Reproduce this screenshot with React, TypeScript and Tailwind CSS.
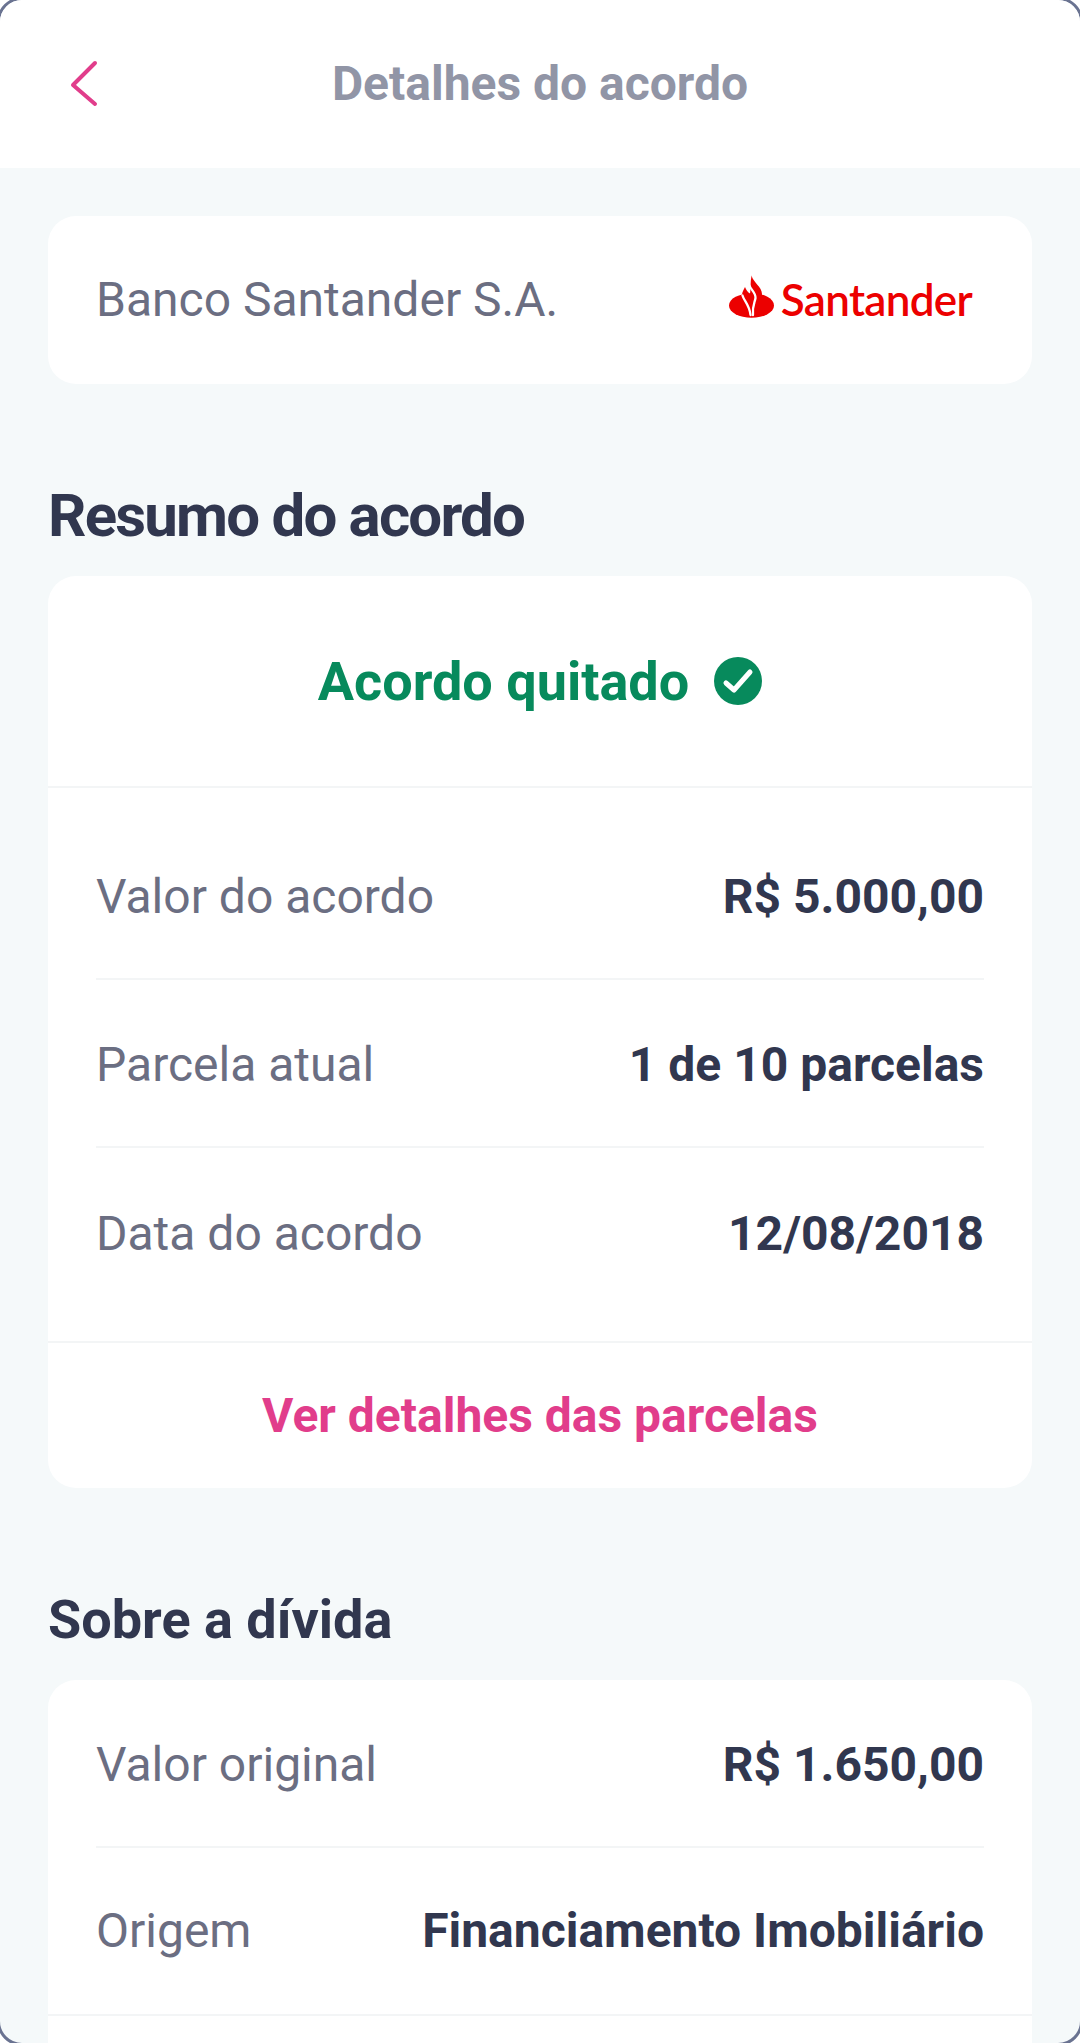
import React from "react";

function Row({ label, value, divider = true }: { label: string; value: string; divider?: boolean }) {
  return (
    <div className={divider ? "mx-12 flex h-[168px] items-center justify-between border-b-2 border-[#f3f5f6] pt-[4px]" : "mx-12 flex h-[168px] items-center justify-between pt-[4px]"}>
      <span className="text-[48px] font-normal text-[#6b6e82]">{label}</span>
      <span className="text-[48px] font-bold text-[#31374f]">{value}</span>
    </div>
  );
}

function SantanderLogo() {
  return (
    <div className="flex items-center gap-[6px]">
      <svg width="46" height="44" viewBox="0 0 46 44" className="mt-[-7px]">
        <ellipse cx="22.5" cy="30.5" rx="22.5" ry="12.3" fill="#ec0000" />
        <path fill="#ec0000" d="M22.7 1C24 7 33 12 33 19c0 5-3 9-5 14H14l-1-13c0-3 2-6 3-8 1 3 3 5 5 7 1-6 0-12 1.700-19z" />
        <path fill="none" stroke="#fff" strokeWidth="2.3" strokeLinecap="round" d="M20.500 10.500C22 15 27 18 26.500 23c-.5 4-3.500 8-2.500 17" />
        <path fill="none" stroke="#fff" strokeWidth="2.3" strokeLinecap="round" d="M13.500 20.500C15 26 20.500 30 21.500 40" />
      </svg>
      <span className="mt-[-2px] text-[44px] leading-none tracking-[-0.7px] text-[#ec0000] font-['Lato',sans-serif] font-semibold">Santander</span>
    </div>
  );
}

export default function App() {
  return (
    <div className="relative h-[2043px] w-[1080px] overflow-hidden bg-white font-['Roboto',sans-serif]">
      <div className="-m-[3px] h-[2049px] w-[1086px] overflow-hidden rounded-[25px] border-[3px] border-[#6a7391] bg-[#f5f9fa]">
        <header className="relative flex h-[168px] items-center justify-center bg-white">
          <svg width="30" height="48" viewBox="0 0 30 48" className="absolute left-[69px] top-[60px]" fill="none">
            <path d="M26 3 4 25l22 19" stroke="#e13d8b" strokeWidth="4" strokeLinecap="round" strokeLinejoin="round" />
          </svg>
          <h1 className="text-[48px] font-bold text-[#9195a6]">Detalhes do acordo</h1>
        </header>

        <main className="px-12 pt-12">
          <section className="flex h-[168px] items-center justify-between rounded-[28px] bg-white pl-12 pr-[60px]">
            <span className="text-[48px] text-[#6b6e82]">Banco Santander S.A.</span>
            <SantanderLogo />
          </section>

          <h2 className="mt-[100px] mb-[28px] text-[60px] leading-[64px] font-bold tracking-[-1.8px] text-[#31374f]">Resumo do acordo</h2>

          <section className="overflow-hidden rounded-[28px] bg-white">
            <div className="flex h-[212px] items-center justify-center gap-[25px] border-b-2 border-[#f3f5f6]">
              <span className="text-[54px] font-bold text-[#078a5c]">Acordo quitado</span>
              <svg width="48" height="48" viewBox="0 0 48 48">
                <circle cx="24" cy="24" r="24" fill="#078a5c" />
                <path d="M12 26l8 7 16-18" fill="none" stroke="#fff" strokeWidth="5" strokeLinecap="round" strokeLinejoin="round" />
              </svg>
            </div>
            <div className="pt-[24px]">
              <Row label="Valor do acordo" value="R$ 5.000,00" />
              <Row label="Parcela atual" value="1 de 10 parcelas" />
              <Row label="Data do acordo" value="12/08/2018" divider={false} />
            </div>
            <div className="mt-[25px] flex h-[147px] items-center justify-center border-t-2 border-[#f3f5f6]">
              <a className="text-[48px] font-bold text-[#e13d8b]">Ver detalhes das parcelas</a>
            </div>
          </section>

          <h2 className="mt-[100px] mb-[28px] text-[54px] leading-[64px] font-bold text-[#31374f]">Sobre a dívida</h2>

          <section className="overflow-hidden rounded-[28px] bg-white">
            <Row label="Valor original" value="R$ 1.650,00" />
            <div className="flex h-[168px] items-center justify-between border-b-2 border-[#f3f5f6] px-12">
              <span className="text-[48px] font-normal text-[#6b6e82]">Origem</span>
              <span className="text-[48px] font-bold text-[#31374f]">Financiamento Imobiliário</span>
            </div>
            <div className="h-[100px]" />
          </section>
        </main>
      </div>
    </div>
  );
}
